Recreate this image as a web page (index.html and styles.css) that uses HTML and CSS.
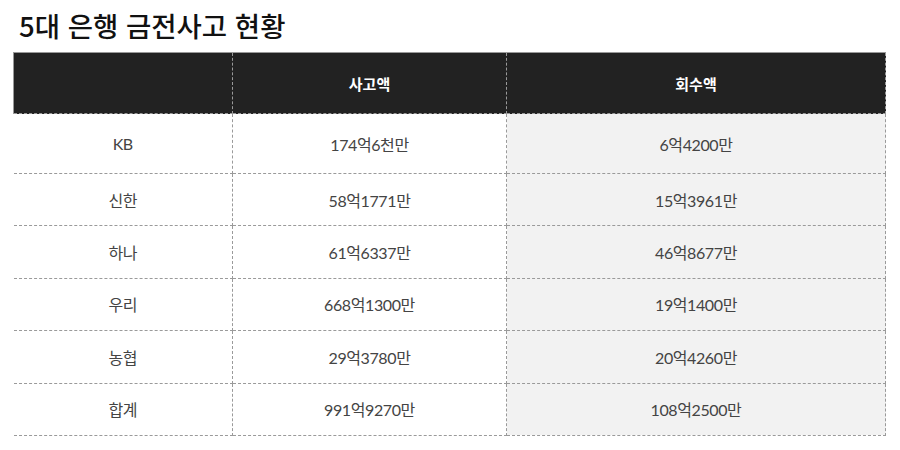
FILE: index.html
```html
<!DOCTYPE html>
<html lang="ko">
<head>
<meta charset="utf-8">
<link rel="stylesheet" href="styles.css">
</head>
<body>
<div class="page">
  <h1 class="title">5대 은행 금전사고 현황</h1>
  <table class="stats">
    <thead>
      <tr><th class="c1"></th><th class="c2">사고액</th><th class="c3">회수액</th></tr>
    </thead>
    <tbody>
      <tr class="first"><td class="c1">KB</td><td class="c2">174억6천만</td><td class="c3">6억4200만</td></tr>
      <tr><td class="c1">신한</td><td class="c2">58억1771만</td><td class="c3">15억3961만</td></tr>
      <tr><td class="c1">하나</td><td class="c2">61억6337만</td><td class="c3">46억8677만</td></tr>
      <tr><td class="c1">우리</td><td class="c2">668억1300만</td><td class="c3">19억1400만</td></tr>
      <tr><td class="c1">농협</td><td class="c2">29억3780만</td><td class="c3">20억4260만</td></tr>
      <tr><td class="c1">합계</td><td class="c2">991억9270만</td><td class="c3">108억2500만</td></tr>
    </tbody>
  </table>
</div>
</body>
</html>
```
FILE: styles.css
```css
html, body {
  margin: 0;
  padding: 0;
  background: #fff;
}
.page {
  padding: 8px 14px 0 13px;
  font-family: Lato, "Noto Sans CJK KR", sans-serif;
}
.title {
  margin: 0 0 9px 6px;
  font-family: "Noto Sans CJK KR", sans-serif;
  font-weight: 500;
  font-size: 27.5px;
  line-height: 35px;
  color: #111;
  letter-spacing: 0;
}
.stats {
  width: 873px;
  border-collapse: collapse;
  table-layout: fixed;
}
.stats th, .stats td {
  text-align: center;
  padding: 0;
  border: 1px dashed #9a9a9a;
}
.stats th {
  height: 60px;
  background: #222;
  color: #fff;
  font-weight: 700;
  font-size: 15px;
  border-top: 1px solid #999;
}
.stats thead th.c1 {
  border-left: 1px solid #999;
}
.stats td {
  height: 51.4px;
  color: #444;
  font-size: 16px;
  letter-spacing: -0.4px;
}
.stats tr.first td {
  height: 59px;
}
.stats td.c1 {
  border-left: none;
}
.stats .c1 { width: 218px; }
.stats .c2 { width: 273px; }
.stats td.c3 {
  background: #f2f2f2;
}
```
